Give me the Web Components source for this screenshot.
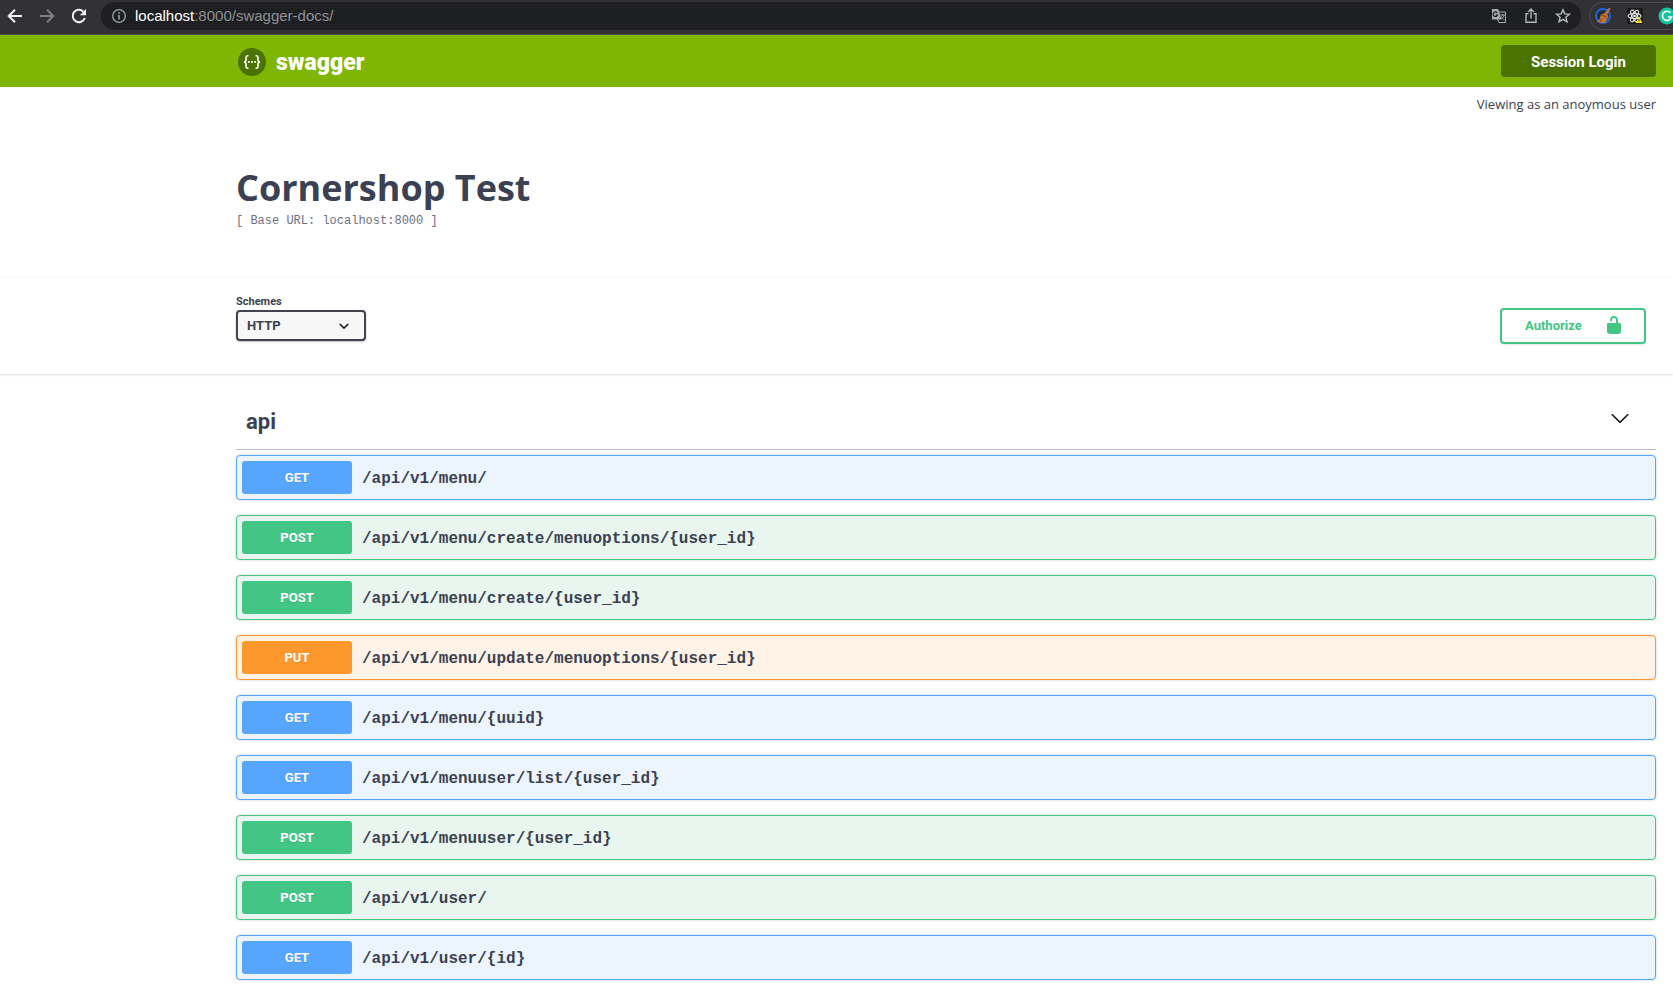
<!DOCTYPE html>
<html lang="en">
<head>
<meta charset="utf-8">
<title>Cornershop Test</title>
<style>
body { margin: 0; background: #fff; color: #3b4151; font-family: "Open Sans", sans-serif; }
</style>
</head>
<body>
<api-page></api-page>
<script>
const define = (name, html, setup) => {
  const template = document.createElement('template');
  template.innerHTML = html;
  customElements.define(name, class extends HTMLElement {
    connectedCallback() {
      if (this.shadowRoot) return;
      const root = this.attachShadow({ mode: 'open' });
      root.append(template.content.cloneNode(true));
      if (setup) setup(this, root);
    }
  });
};

define('browser-bar', `
<style>
:host { display: flex; align-items: center; box-sizing: border-box; height: 35px; padding: 0 0 3px 6px; gap: 8px; background: #323136; border-bottom: 1px solid #4b4b4e; overflow: hidden; }
button { display: block; border: 0; padding: 0; background: none; flex: none; }
svg { display: block; }
nav { display: flex; gap: 14px; padding-right: 5px; }
form { display: flex; align-items: center; flex: 1; min-width: 0; box-sizing: border-box; height: 28px; margin: 0; padding: 0 9px 0 10px; border-radius: 14px; background: #1e1f23; }
.url { flex: 1; min-width: 0; margin-left: 8px; font: 15px/20px "Liberation Sans", sans-serif; color: #8e9093; white-space: nowrap; }
b { font-weight: 400; color: #fff; }
.tools { display: flex; gap: 14px; }
.ext { display: flex; align-items: center; flex: none; box-sizing: border-box; width: 84px; height: 28px; padding-left: 4px; gap: 14px; border: 1px solid #4c4b50; border-right: 0; border-radius: 14px 0 0 14px; overflow: hidden; }
</style>
<nav aria-label="History">
  <button aria-label="Back"><svg width="18" height="18" viewBox="0 0 18 18" fill="none" stroke="#f1f2f3" stroke-width="2"><path d="M16 9H3M9 2.7 2.7 9 9 15.3"/></svg></button>
  <button aria-label="Forward"><svg width="18" height="18" viewBox="0 0 18 18" fill="none" stroke="#808084" stroke-width="2"><path d="M2 9h13M9 2.7 15.3 9 9 15.3"/></svg></button>
  <button aria-label="Reload"><svg width="18" height="18" viewBox="0 0 18 18"><path fill="none" stroke="#f1f2f3" stroke-width="2" d="M14.8 11A6.2 6.2 0 1 1 13.4 4.6"/><path fill="#f1f2f3" d="M16 2v6.2H9.8z"/></svg></button>
</nav>
<form>
  <button type="button" aria-label="Site information"><svg width="16" height="16" viewBox="0 0 16 16" fill="none" stroke="#a0a2a5"><circle cx="8" cy="8" r="6.3" stroke-width="1.3"/><path stroke-width="1.6" d="M8 7v4.5M8 4.2v1.6"/></svg></button>
  <div class="url"><b>localhost</b>:8000/swagger-docs/</div>
  <div class="tools">
    <button type="button" aria-label="Translate"><svg width="18" height="18" viewBox="0 0 18 18"><path fill="none" stroke="#a9aaad" d="M8 5h7.500v10.500H9L7.500 12"/><path fill="#a9aaad" d="M2 2h6.200l3.300 10.500H2z"/><path fill="none" stroke="#1e1f23" stroke-width="1.200" d="M7.300 5.800A2.300 2.300 0 1 0 7.600 8H5.600"/><path fill="none" stroke="#a9aaad" d="M10.300 8h4.500M12.500 7v1M14 8c-.3 2-1.300 3-2.600 4M11.400 9.500c.7 1.700 1.600 2.800 3 3.500"/></svg></button>
    <button type="button" aria-label="Share"><svg width="18" height="18" viewBox="0 0 18 18" fill="none" stroke="#b4b5b8" stroke-width="1.400"><path d="M6.500 6.700H4v8.600h10V6.700h-2.500M9 11.500V2.300M6 5l3-3 3 3"/></svg></button>
    <button type="button" aria-label="Bookmark"><svg width="18" height="18" viewBox="0 0 18 18" fill="none" stroke="#b9babc" stroke-width="1.400"><path d="m9 2.700 1.800 4.200 4.600.4-3.500 3 1.100 4.500-4-2.400-4 2.400 1.100-4.500-3.500-3 4.600-.4z"/></svg></button>
  </div>
</form>
<div class="ext">
  <button aria-label="Clear cache"><svg width="18" height="18" viewBox="0 0 18 18"><circle cx="9" cy="9" r="7" fill="#252a34" stroke="#1769df" stroke-width="2"/><path fill="#c37135" d="m15 .8 1.600 1-3.300 5.400 1.200 2.500-3.200 6.100c-3 .6-6.300-.1-8.300-1.600l2.500-2L7 7.200l3.500-.9z"/><path stroke="#75421f" fill="none" d="m7 7.500 6 3M6 15l2-3.500"/></svg></button>
  <button aria-label="React tools"><svg width="18" height="18" viewBox="0 0 18 18"><path fill="#1d1d1e" d="M1 1h16v16H1z"/><g fill="none" stroke="#e9e9e9" stroke-width="1.100"><ellipse cx="8.500" cy="9" rx="6.500" ry="2.500"/><ellipse cx="8.500" cy="9" rx="6.500" ry="2.500" transform="rotate(60 8.500 9)"/><ellipse cx="8.500" cy="9" rx="6.500" ry="2.500" transform="rotate(120 8.500 9)"/></g><circle cx="8.500" cy="9" r="1.300" fill="#fff"/><path fill="#f4df35" d="m13 9.500 3.500 6.500h-7z"/><path stroke="#4f4a1b" d="M13 12v2.500"/></svg></button>
  <button aria-label="Grammar"><svg width="18" height="18" viewBox="0 0 18 18"><circle cx="9" cy="9" r="8.500" fill="#15c39a"/><path fill="none" stroke="#fff" stroke-width="1.700" d="M12.500 5.800A4.600 4.600 0 1 0 13.500 10H10"/></svg></button>
</div>`);

define('top-bar', `
<style>
:host { display: flex; align-items: center; justify-content: space-between; box-sizing: border-box; height: 52px; padding: 0 17px 0 238px; background: #7fb606; }
a { display: flex; align-items: center; gap: 10px; margin-top: 2px; color: #fff; text-decoration: none; font: 900 23px/28px Roboto, sans-serif; }
svg { display: block; }
span { padding-top: 2px; }
button { box-sizing: border-box; width: 155px; height: 32px; padding: 1px 0 0; border: 0; border-radius: 4px; background: #4a7302; color: #fff; font: 700 15px/20px Roboto, sans-serif; }
</style>
<a href="#"><svg width="28" height="28" viewBox="0 0 28 28"><circle cx="14" cy="14" r="14" fill="#4a7302"/><path fill="none" stroke="#fff" stroke-width="1.600" d="M10.500 7.800H9.600c-1.200 0-1.600.6-1.600 1.700v2.300c0 1.300-.6 2-2 2.200 1.400.2 2 .9 2 2.200v2.300c0 1.100.4 1.700 1.600 1.700h.9M17.500 7.800h.9c1.200 0 1.600.6 1.600 1.700v2.300c0 1.300.6 2 2 2.200-1.400.2-2 .9-2 2.200v2.300c0 1.100-.4 1.700-1.600 1.700h-.9"/><g fill="#fff"><circle cx="10.800" cy="14" r="1.100"/><circle cx="14" cy="14" r="1.100"/><circle cx="17.200" cy="14" r="1.100"/></g></svg><span>swagger</span></a>
<button>Session Login</button>`);

define('api-info', `
<style>
:host { display: block; padding: 8px 17px 46px 236px; }
p { margin: 0; text-align: right; font-size: 13px; line-height: 18px; }
h1 { margin: 53px 0 1px; font-size: 36px; line-height: 44px; font-weight: 700; }
pre { margin: 0; font: 12px/20px "Liberation Mono", monospace; color: #6b7080; }
</style>
<p>Viewing as an anoymous user</p>
<h1>Cornershop Test</h1>
<pre>[ Base URL: localhost:8000 ]</pre>`);

define('scheme-bar', `
<style>
:host { display: flex; align-items: flex-end; justify-content: space-between; padding: 17px 27px 30px 236px; border-top: 1px solid #f8f8f8; box-shadow: 0 1px 2px rgba(0,0,0,.15); }
.field { display: flex; flex-direction: column; gap: 1px; margin-bottom: 3px; font-family: Roboto, sans-serif; }
label { font-size: 11px; line-height: 14px; font-weight: 700; }
.box { display: grid; align-items: center; }
.box > * { grid-area: 1 / 1; }
select { appearance: none; box-sizing: border-box; width: 130px; height: 31px; margin: 0; padding: 0 30px 0 9px; border: 2px solid #41444e; border-radius: 4px; background: #f7f7f7; box-shadow: 0 1px 2px rgba(0,0,0,.25); color: #3b4151; font: 700 13px/20px Roboto, sans-serif; }
.box svg { justify-self: end; margin-right: 12px; pointer-events: none; }
button { display: flex; align-items: center; justify-content: space-between; box-sizing: border-box; width: 146px; height: 36px; padding: 0 20px 0 23px; border: 2px solid #43c586; border-radius: 4px; background: #fff; box-shadow: 0 1px 2px rgba(0,0,0,.1); color: #43c586; font: 700 13px/20px Roboto, sans-serif; }
svg { display: block; }
button svg { margin-bottom: 2px; }
</style>
<div class="field"><label for="schemes">Schemes</label>
<div class="box"><select id="schemes"><option>HTTP</option></select>
<svg width="20" height="20" viewBox="0 0 20 20"><path fill="#111" d="M13.418 7.859a.695.695 0 0 1 .978 0 .68.68 0 0 1 0 .969l-3.908 3.830a.697.697 0 0 1-.979 0l-3.908-3.830a.68.68 0 0 1 0-.969.695.695 0 0 1 .978 0L10 11l3.418-3.141z"/></svg></div></div>
<button><span>Authorize</span><svg width="20" height="20" viewBox="0 0 20 20"><path fill="#43c586" d="M15.800 8H14V5.600C14 2.703 12.665 1 10 1 7.334 1 6 2.703 6 5.600V6h2v-.801C8 3.754 8.797 3 10 3c1.203 0 2 .754 2 2.199V8H4c-.553 0-1 .646-1 1.199V17c0 .549.428 1.139.951 1.307l1.197.387C5.672 18.861 6.550 19 7.100 19h5.800c.549 0 1.428-.139 1.951-.307l1.196-.387c.524-.167.953-.757.953-1.306V9.199C17 8.646 16.352 8 15.800 8z"/></svg></button>`);

define('tag-section', `
<style>
:host { display: block; padding: 20px 17px 14px 236px; }
header { display: flex; align-items: center; justify-content: space-between; box-sizing: border-box; height: 56px; margin-bottom: 5px; padding: 0 26px 0 10px; border-bottom: 1px solid #b9bbc0; }
h2 { margin: 0; font: 700 22px/28px Roboto, sans-serif; }
button { border: 0; padding: 0 0 8px; background: none; }
svg { display: block; }
.list { display: flex; flex-direction: column; gap: 15px; }
</style>
<header><h2></h2><button aria-label="Collapse operations"><svg width="20" height="20" viewBox="0 0 20 20"><path fill="#111" d="M17.418 6.109c.272-.268.709-.268.979 0s.271.701 0 .969l-7.908 7.830c-.270.268-.707.268-.979 0l-7.908-7.830c-.270-.268-.270-.701 0-.969.271-.268.709-.268.979 0L10 13.250l7.418-7.141z"/></svg></button></header>
<div class="list"><slot></slot></div>`, (host, root) => {
  root.querySelector('h2').textContent = host.getAttribute('name');
});

define('api-operation', `
<style>
:host { display: block; --tone: #56a5fe; --tint: #ecf4fe; }
:host([method="POST"]) { --tone: #43c586; --tint: #e8f6ef; }
:host([method="PUT"]) { --tone: #fd982c; --tint: #fff2e6; }
button { display: flex; align-items: center; gap: 10px; box-sizing: border-box; width: 100%; height: 45px; padding: 0 5px; border: 1px solid var(--tone); border-radius: 4px; background: var(--tint); box-shadow: 0 0 3px rgba(0,0,0,.19); color: #3b4151; text-align: left; }
.method { flex: none; width: 110px; border-radius: 3px; background: var(--tone); color: #fff; text-align: center; text-shadow: 0 1px 0 rgba(0,0,0,.1); font: 700 13px/33px Roboto, sans-serif; }
.path { min-width: 0; padding-top: 3px; font: 600 16px/20px "Liberation Mono", monospace; }
</style>
<button><span class="method"></span><span class="path"><slot></slot></span></button>`, (host, root) => {
  root.querySelector('.method').textContent = host.getAttribute('method');
});

define('api-page', `
<style>:host { display: block; }</style>
<browser-bar></browser-bar>
<top-bar></top-bar>
<main>
<api-info></api-info>
<scheme-bar></scheme-bar>
<tag-section name="api">
<api-operation method="GET">/api/v1/menu/</api-operation>
<api-operation method="POST">/api/v1/menu/create/menuoptions/{user_id}</api-operation>
<api-operation method="POST">/api/v1/menu/create/{user_id}</api-operation>
<api-operation method="PUT">/api/v1/menu/update/menuoptions/{user_id}</api-operation>
<api-operation method="GET">/api/v1/menu/{uuid}</api-operation>
<api-operation method="GET">/api/v1/menuuser/list/{user_id}</api-operation>
<api-operation method="POST">/api/v1/menuuser/{user_id}</api-operation>
<api-operation method="POST">/api/v1/user/</api-operation>
<api-operation method="GET">/api/v1/user/{id}</api-operation>
</tag-section>
</main>`);
</script>
</body>
</html>
